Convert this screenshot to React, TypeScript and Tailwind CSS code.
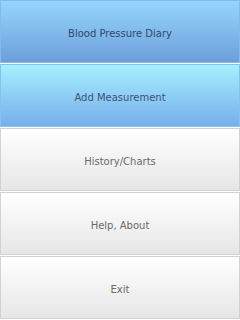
import React from 'react';

type Item = { label: string; tone: 'dark' | 'light' | 'plain' };

const items: Item[] = [
    { label: 'Blood Pressure Diary', tone: 'dark' },
    { label: 'Add Measurement', tone: 'light' },
    { label: 'History/Charts', tone: 'plain' },
    { label: 'Help, About', tone: 'plain' },
    { label: 'Exit', tone: 'plain' },
];

const toneClass: Record<Item['tone'], string> = {
    dark: 'border-[#82bcef] bg-gradient-to-b from-[#96d6fd] to-[#6c9fd9] text-[#34486a]',
    light: 'border-[#84c2f0] bg-gradient-to-b from-[#a6efff] to-[#78aeea] text-[#3c5474]',
    plain: 'border-[#d2d2d2] bg-gradient-to-b from-[#ffffff] to-[#e6e6e6] text-[#6a6a6a]',
};

export default function App() {
    return (
        <div className="w-[240px] h-[320px] bg-white flex flex-col overflow-hidden" style={{ fontFamily: '"DejaVu Sans", sans-serif' }}>
            {items.map((item) => (
                <div key={item.label} className="h-16 pb-px flex">
                    <button
                        className={`flex-1 flex items-center justify-center pt-[3px] border text-[10px] ${toneClass[item.tone]}`}
                    >
                        {item.label}
                    </button>
                </div>
            ))}
        </div>
    );
}
